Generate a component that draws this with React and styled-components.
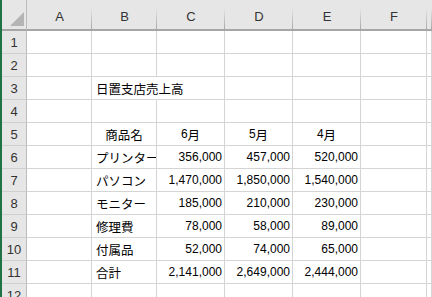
import React from "react";
import styled, { createGlobalStyle } from "styled-components";

const GlobalStyle = createGlobalStyle`
  html, body {
    margin: 0;
    padding: 0;
    background: #ffffff;
    overflow: hidden;
  }
`;

const COLS = ["A", "B", "C", "D", "E", "F", ""];
const WIDTHS = [65, 65, 68, 68, 68, 66];

const Sheet = styled.div`
  width: 432px;
  height: 297px;
  overflow: hidden;
  border-left: 2px solid #217346;
  box-sizing: border-box;
  display: grid;
  grid-template-columns: 25px ${WIDTHS.map((w) => w + "px").join(" ")} 1fr;
  grid-auto-rows: 23px;
  grid-template-rows: 31px;
  font-family: "Liberation Sans", "Noto Sans CJK JP", sans-serif;
  color: #000;
`;

const Corner = styled.div`
  position: relative;
  background: #e6e6e6;
  border-right: 1px solid #bcbcbc;
  border-bottom: 2px solid #a6a6a6;
  box-sizing: border-box;

  &::after {
    content: "";
    position: absolute;
    right: 2px;
    bottom: 3px;
    width: 0;
    height: 0;
    border-left: 14px solid transparent;
    border-bottom: 14px solid #b4b4b4;
  }
`;

const ColHead = styled.div`
  position: relative;
  background: #e6e6e6;
  border-bottom: 2px solid #a6a6a6;
  box-sizing: border-box;
  display: flex;
  justify-content: center;
  align-items: flex-end;
  padding-bottom: 5px;
  font-size: 13px;
  color: #333;

  &::after {
    content: "";
    position: absolute;
    right: 0;
    top: 8px;
    bottom: 0;
    width: 1px;
    background: linear-gradient(#e6e6e6, #a8a8a8);
  }
`;

const RowHead = styled.div`
  background: #e6e6e6;
  border-right: 1px solid #bcbcbc;
  border-bottom: 1px solid #cfcfcf;
  box-sizing: border-box;
  display: flex;
  justify-content: center;
  align-items: center;
  font-size: 13px;
  color: #333;
`;

const Cell = styled.div`
  border-right: 1px solid ${(p) => (p.$spill ? "transparent" : "#d4d4d4")};
  border-bottom: 1px solid #d4d4d4;
  box-sizing: border-box;
  display: flex;
  align-items: center;
  justify-content: ${(p) =>
    p.$align === "right" ? "flex-end" : p.$align === "center" ? "center" : "flex-start"};
  padding: 0 ${(p) => (p.$align === "right" ? "2px" : "0")} 0 ${(p) => (p.$align === "left" ? "4px" : "0")};
  font-size: ${(p) => (p.$jp ? "12.5px" : "12px")};
  white-space: nowrap;
  overflow: ${(p) => (p.$spill ? "visible" : "hidden")};
  min-width: 0;
`;

const Jp = styled.span`
  font-size: 12.5px;
`;

const items = [
  ["プリンター", "356,000", "457,000", "520,000"],
  ["パソコン", "1,470,000", "1,850,000", "1,540,000"],
  ["モニター", "185,000", "210,000", "230,000"],
  ["修理費", "78,000", "58,000", "89,000"],
  ["付属品", "52,000", "74,000", "65,000"],
  ["合計", "2,141,000", "2,649,000", "2,444,000"],
];

const blankRow = (r) => {
  const out = [<RowHead key={"h" + r}>{r}</RowHead>];
  COLS.forEach((c, i) => out.push(<Cell key={r + "-" + i} />));
  return out;
};

const App = () => {
  const rows = [];

  rows.push(<Corner key="corner" />);
  COLS.forEach((c, i) => rows.push(<ColHead key={"c" + i}>{c}</ColHead>));

  rows.push(...blankRow(1));
  rows.push(...blankRow(2));

  rows.push(<RowHead key="h3">3</RowHead>);
  rows.push(<Cell key="3a" />);
  rows.push(
    <Cell key="3b" $align="left" $jp $spill>
      日置支店売上高
    </Cell>
  );
  for (let i = 0; i < 5; i++) rows.push(<Cell key={"3x" + i} />);

  rows.push(...blankRow(4));

  rows.push(<RowHead key="h5">5</RowHead>);
  rows.push(<Cell key="5a" />);
  rows.push(
    <Cell key="5b" $align="center" $jp>
      商品名
    </Cell>
  );
  ["6", "5", "4"].forEach((m) =>
    rows.push(
      <Cell key={"5m" + m} $align="center">
        {m}
        <Jp>月</Jp>
      </Cell>
    )
  );
  rows.push(<Cell key="5f" />);
  rows.push(<Cell key="5g" />);

  items.forEach((it, idx) => {
    const r = idx + 6;
    rows.push(<RowHead key={"h" + r}>{r}</RowHead>);
    rows.push(<Cell key={r + "a"} />);
    rows.push(
      <Cell key={r + "b"} $align="left" $jp>
        {it[0]}
      </Cell>
    );
    it.slice(1).forEach((v, j) =>
      rows.push(
        <Cell key={r + "v" + j} $align="right">
          {v}
        </Cell>
      )
    );
    rows.push(<Cell key={r + "f"} />);
    rows.push(<Cell key={r + "g"} />);
  });

  rows.push(...blankRow(12));

  return (
    <>
      <GlobalStyle />
      <Sheet>{rows}</Sheet>
    </>
  );
};

export default App;
